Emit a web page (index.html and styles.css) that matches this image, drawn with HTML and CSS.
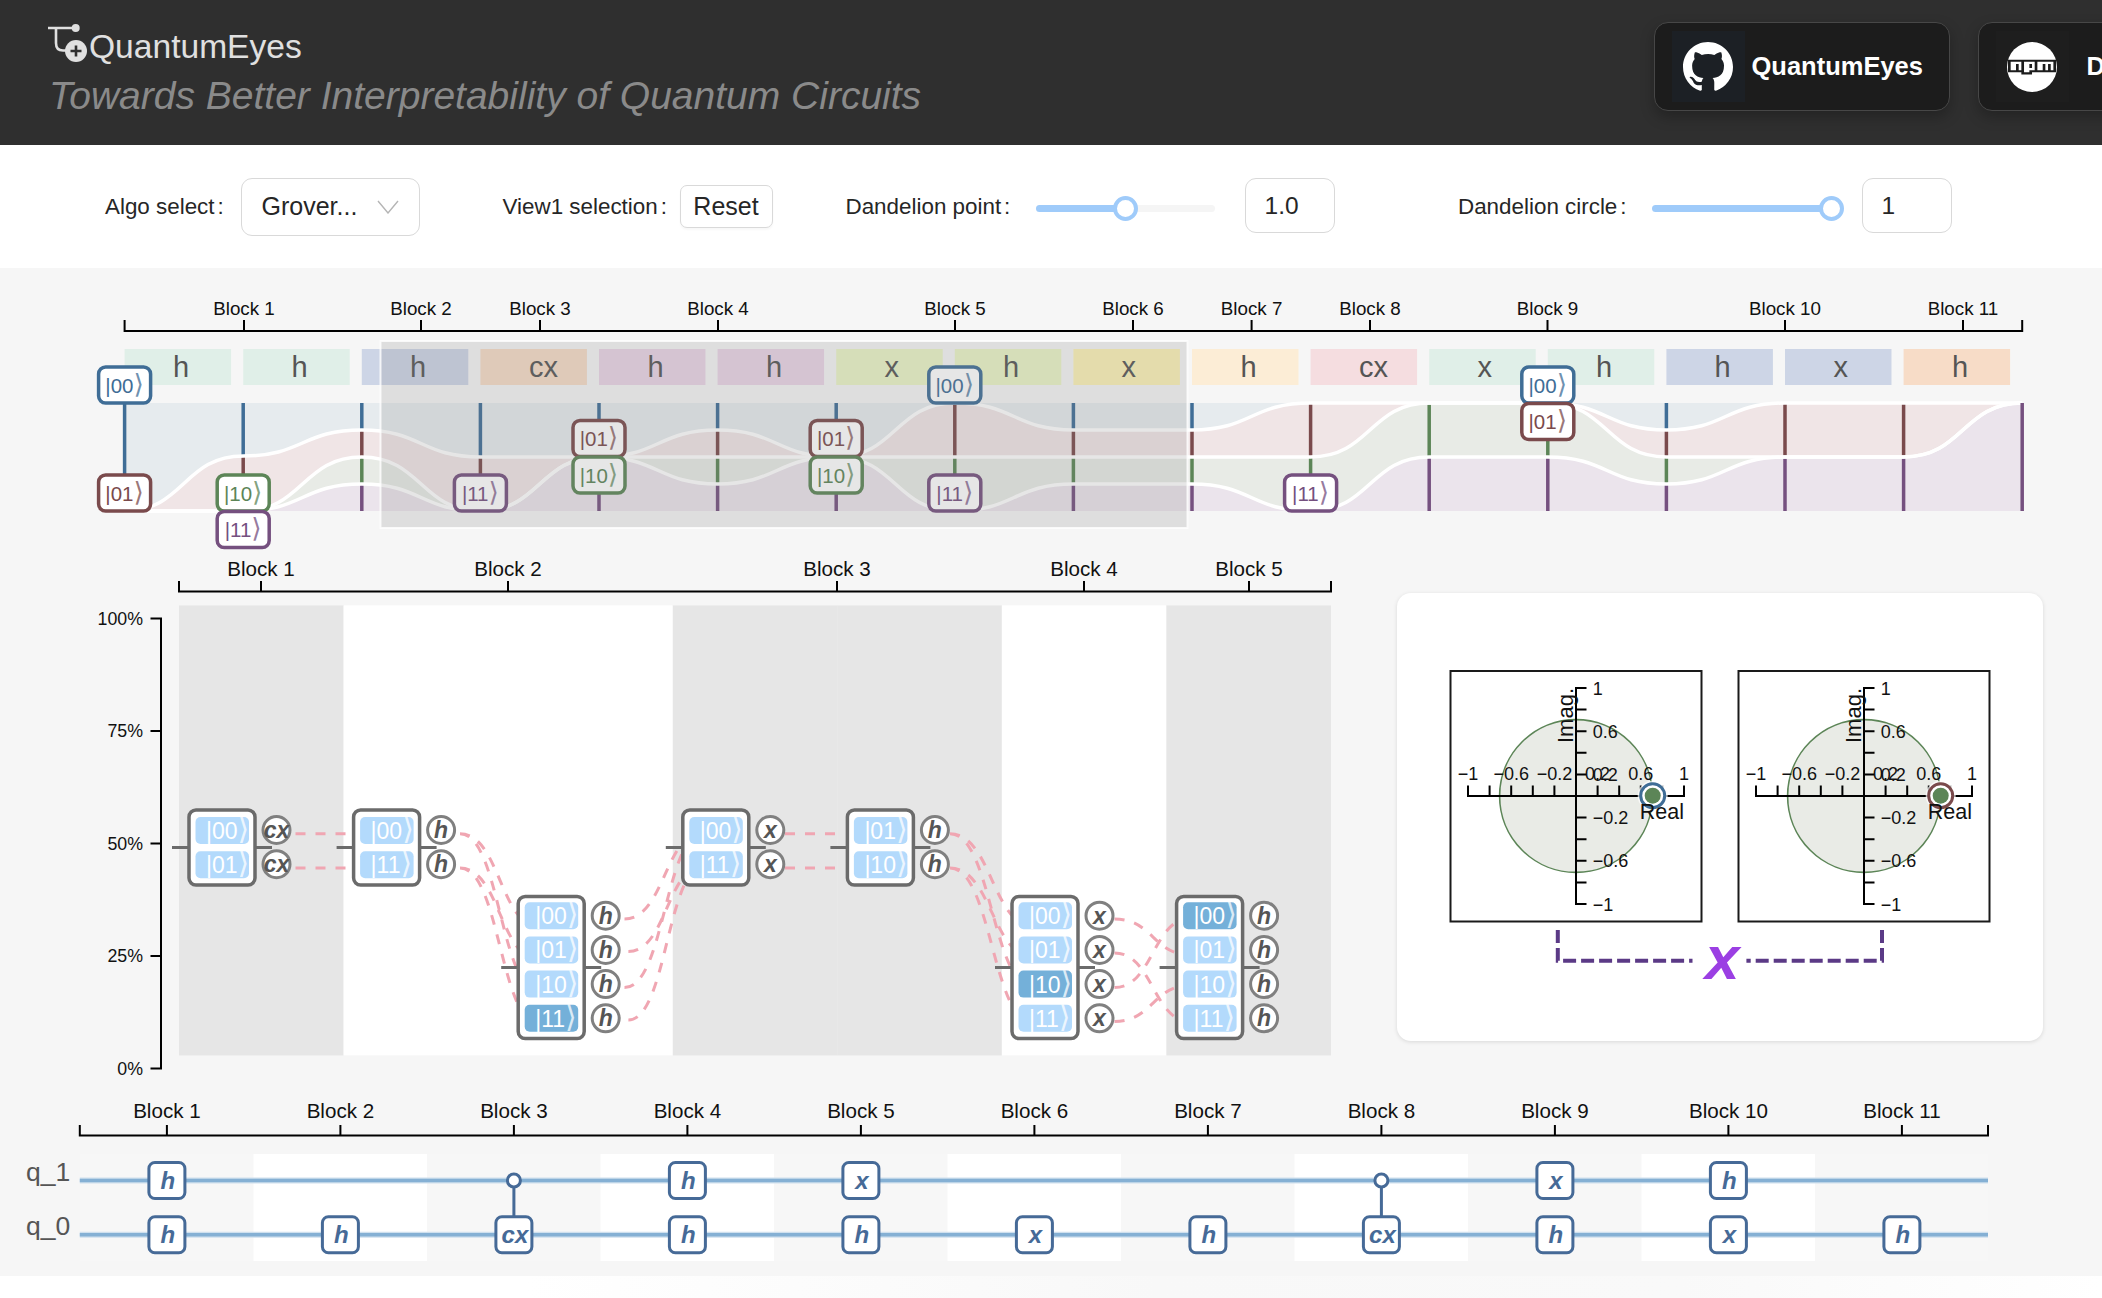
FILE: index.html
```html
<!DOCTYPE html>
<html lang="en">
<head>
<meta charset="utf-8">
<title>QuantumEyes</title>
<link rel="stylesheet" href="styles.css">
</head>
<body>
<header class="header">
  <div class="title-block">
    <h1 class="brand">
      <svg class="logo" viewBox="48 24 40 40" width="40" height="40">
        <path class="logo-line" d="M48 29H75M56 29V44Q56 51.500 63 51.500H68"/>
        <circle class="logo-dot" cx="75.700" cy="29" r="4"/>
        <circle class="logo-dot" cx="76" cy="52" r="11"/>
        <path class="logo-plus" d="M70.500 52H81.500M76 46.500V57.500"/>
      </svg>
      <span>QuantumEyes</span>
    </h1>
    <p class="subtitle">Towards Better Interpretability of Quantum Circuits</p>
  </div>
  <div class="links">
    <a class="link link-gh">
      <span class="link-icon">
        <svg viewBox="0 0 16 16" width="50" height="50"><path class="mark" d="M8 0C3.580 0 0 3.580 0 8c0 3.540 2.290 6.530 5.470 7.590.4.070.55-.17.55-.38 0-.19-.01-.82-.01-1.490-2.010.37-2.530-.49-2.690-.94-.09-.23-.48-.94-.82-1.130-.28-.15-.68-.52-.01-.53.63-.01 1.080.58 1.230.82.72 1.210 1.870.87 2.330.66.07-.52.28-.87.51-1.070-1.780-.2-3.640-.89-3.640-3.950 0-.87.31-1.590.82-2.150-.08-.2-.36-1.020.08-2.120 0 0 .67-.21 2.200.82.64-.18 1.320-.27 2-.27s1.360.09 2 .27c1.530-1.040 2.200-.82 2.200-.82.44 1.100.16 1.920.08 2.120.51.56.82 1.270.82 2.150 0 3.070-1.870 3.750-3.650 3.950.29.25.54.73.54 1.480 0 1.070-.01 1.930-.01 2.200 0 .21.15.46.55.38A8.013 8.013 0 0016 8c0-4.420-3.580-8-8-8z"/></svg>
      </span>
      <span class="link-text">QuantumEyes</span>
    </a>
    <a class="link link-npm">
      <span class="link-icon">
        <svg viewBox="0 0 50 50" width="50" height="50">
          <circle class="mark" cx="25" cy="25" r="25"/>
          <path class="npm" transform="translate(1 17.700) scale(2.670 2.100)" d="M0 0h18v6H9v1H5V6H0V0zM1 5h2V2h1v3h1V1H1V5zM6 1v5h2V5h2V1H6zM8 2h1v2H8V2zM11 1v4h2V2h1v3h1V2h1v3h1V1H11z"/>
        </svg>
      </span>
      <span class="link-text">Download</span>
    </a>
  </div>
</header>

<section class="controls">
  <label class="lbl lbl-algo">Algo select<span class="colon">:</span></label>
  <div class="select">
    <span>Grover...</span>
    <svg class="chev" viewBox="0 0 22 14" width="22" height="14"><path d="M1 1L11 13L21 1"/></svg>
  </div>
  <label class="lbl lbl-view">View1 selection<span class="colon">:</span></label>
  <button class="btn">Reset</button>
  <label class="lbl lbl-point">Dandelion point<span class="colon">:</span></label>
  <div class="slider slider-point">
    <div class="track"><div class="fill fill-half"></div></div>
    <div class="thumb thumb-half"></div>
  </div>
  <div class="num">1.0</div>
  <label class="lbl lbl-circle">Dandelion circle<span class="colon">:</span></label>
  <div class="slider slider-circle">
    <div class="track"><div class="fill fill-full"></div></div>
    <div class="thumb thumb-full"></div>
  </div>
  <div class="num">1</div>
</section>

<main class="main">
  <svg class="view view-top" viewBox="0 268 2102 282" width="2102" height="282">
    <path class="axis" d="M124.600 320V331H2022.200V320M244 320V331M421 320V331M540 320V331M718 320V331M955 320V331M1133 320V331M1251.600 320V331M1370 320V331M1547.500 320V331M1785 320V331M1963 320V331"/>
    <text class="blk" x="244" y="315">Block 1</text>
    <text class="blk" x="421" y="315">Block 2</text>
    <text class="blk" x="540" y="315">Block 3</text>
    <text class="blk" x="718" y="315">Block 4</text>
    <text class="blk" x="955" y="315">Block 5</text>
    <text class="blk" x="1133" y="315">Block 6</text>
    <text class="blk" x="1251.600" y="315">Block 7</text>
    <text class="blk" x="1370" y="315">Block 8</text>
    <text class="blk" x="1547.500" y="315">Block 9</text>
    <text class="blk" x="1785" y="315">Block 10</text>
    <text class="blk" x="1963" y="315">Block 11</text>

    <rect class="g-mint" x="124.600" y="349" width="106.500" height="36"/><text class="gname" x="173" y="377">h</text>
    <rect class="g-mint" x="243.200" y="349" width="106.500" height="36"/><text class="gname" x="291.500" y="377">h</text>
    <rect class="g-blue" x="361.800" y="349" width="106.500" height="36"/><text class="gname" x="410" y="377">h</text>
    <rect class="g-peach" x="480.400" y="349" width="106.500" height="36"/><text class="gname" x="529" y="377">cx</text>
    <rect class="g-mauve" x="599" y="349" width="106.500" height="36"/><text class="gname" x="647.500" y="377">h</text>
    <rect class="g-mauve" x="717.600" y="349" width="106.500" height="36"/><text class="gname" x="766" y="377">h</text>
    <rect class="g-lime" x="836.200" y="349" width="106.500" height="36"/><text class="gname" x="884.500" y="377">x</text>
    <rect class="g-lime" x="954.800" y="349" width="106.500" height="36"/><text class="gname" x="1003" y="377">h</text>
    <rect class="g-yellow" x="1073.400" y="349" width="106.500" height="36"/><text class="gname" x="1121.500" y="377">x</text>
    <rect class="g-cream" x="1192" y="349" width="106.500" height="36"/><text class="gname" x="1240.500" y="377">h</text>
    <rect class="g-rose" x="1310.600" y="349" width="106.500" height="36"/><text class="gname" x="1359" y="377">cx</text>
    <rect class="g-mint" x="1429.200" y="349" width="106.500" height="36"/><text class="gname" x="1477.500" y="377">x</text>
    <rect class="g-mint" x="1547.800" y="349" width="106.500" height="36"/><text class="gname" x="1596" y="377">h</text>
    <rect class="g-blue" x="1666.400" y="349" width="106.500" height="36"/><text class="gname" x="1714.500" y="377">h</text>
    <rect class="g-blue" x="1785" y="349" width="106.500" height="36"/><text class="gname" x="1833.500" y="377">x</text>
    <rect class="g-peach" x="1903.600" y="349" width="106.500" height="36"/><text class="gname" x="1952" y="377">h</text>

    <rect class="band-blue" x="124.600" y="403" width="1897.600" height="108"/>
    <path class="band-red" d="M124.600 511c59.300 0 59.300 -55 118.600 -55c59.300 0 59.300 -26 118.600 -26c59.300 0 59.300 27 118.600 27c59.300 0 59.300 0 118.600 0c59.300 0 59.300 -27 118.600 -27c59.300 0 59.300 27 118.600 27c59.300 0 59.300 -54 118.600 -54c59.300 0 59.300 27 118.600 27c59.300 0 59.300 0 118.600 0c59.300 0 59.300 -27 118.600 -27c59.300 0 59.300 0 118.600 0c59.300 0 59.300 0 118.600 0c59.300 0 59.300 27 118.600 27c59.300 0 59.300 -27 118.600 -27c59.300 0 59.300 0 118.600 0c59.300 0 59.300 0 118.600 0V511H124.600"/>
    <path class="band-green" d="M124.600 511c59.300 0 59.300 0 118.600 0c59.300 0 59.300 -54 118.600 -54c59.300 0 59.300 54 118.600 54c59.300 0 59.300 -54 118.600 -54c59.300 0 59.300 0 118.600 0c59.300 0 59.300 0 118.600 0c59.300 0 59.300 0 118.600 0c59.300 0 59.300 0 118.600 0c59.300 0 59.300 0 118.600 0c59.300 0 59.300 0 118.600 0c59.300 0 59.300 -54 118.600 -54c59.300 0 59.300 0 118.600 0c59.300 0 59.300 54 118.600 54c59.300 0 59.300 0 118.600 0c59.300 0 59.300 0 118.600 0c59.300 0 59.300 -54 118.600 -54V511H124.600"/>
    <path class="band-purple" d="M124.600 511c59.300 0 59.300 0 118.600 0c59.300 0 59.300 -27 118.600 -27c59.300 0 59.300 27 118.600 27c59.300 0 59.300 -54 118.600 -54c59.300 0 59.300 27 118.600 27c59.300 0 59.300 -27 118.600 -27c59.300 0 59.300 54 118.600 54c59.300 0 59.300 -27 118.600 -27c59.300 0 59.300 0 118.600 0c59.300 0 59.300 27 118.600 27c59.300 0 59.300 -54 118.600 -54c59.300 0 59.300 0 118.600 0c59.300 0 59.300 27 118.600 27c59.300 0 59.300 -27 118.600 -27c59.300 0 59.300 0 118.600 0c59.300 0 59.300 -54 118.600 -54V511H124.600"/>
    <path class="v v-blue" d="M124.600 403V511M243.200 403V456M361.800 403V430M480.400 403V457M599 403V457M717.600 403V430M836.200 403V457M1073.400 403V430M1192 403V430M1666.400 403V430"/>
    <path class="v v-red" d="M243.200 456V511M361.800 430V457M480.400 457V511M717.600 430V457M954.800 403V457M1073.400 430V457M1192 430V457M1310.600 403V457M1666.400 430V457M1785 403V457M1903.600 403V457"/>
    <path class="v v-green" d="M361.800 457V484M717.600 457V484M954.800 457V511M1073.400 457V484M1192 457V484M1310.600 457V511M1429.200 403V457M1547.800 403V457M1666.400 457V484"/>
    <path class="v v-purple" d="M361.800 484V511M599 457V511M717.600 484V511M836.200 457V511M1073.400 484V511M1192 484V511M1429.200 457V511M1547.800 457V511M1666.400 484V511M1785 457V511M1903.600 457V511"/>
    <path class="curve" d="M124.600 511c59.300 0 59.300 -55 118.600 -55c59.300 0 59.300 -26 118.600 -26c59.300 0 59.300 27 118.600 27c59.300 0 59.300 0 118.600 0c59.300 0 59.300 -27 118.600 -27c59.300 0 59.300 27 118.600 27c59.300 0 59.300 -54 118.600 -54c59.300 0 59.300 27 118.600 27c59.300 0 59.300 0 118.600 0c59.300 0 59.300 -27 118.600 -27c59.300 0 59.300 0 118.600 0c59.300 0 59.300 0 118.600 0c59.300 0 59.300 27 118.600 27c59.300 0 59.300 -27 118.600 -27c59.300 0 59.300 0 118.600 0c59.300 0 59.300 0 118.600 0"/>
    <path class="curve" d="M124.600 511c59.300 0 59.300 0 118.600 0c59.300 0 59.300 -54 118.600 -54c59.300 0 59.300 54 118.600 54c59.300 0 59.300 -54 118.600 -54c59.300 0 59.300 0 118.600 0c59.300 0 59.300 0 118.600 0c59.300 0 59.300 0 118.600 0c59.300 0 59.300 0 118.600 0c59.300 0 59.300 0 118.600 0c59.300 0 59.300 0 118.600 0c59.300 0 59.300 -54 118.600 -54c59.300 0 59.300 0 118.600 0c59.300 0 59.300 54 118.600 54c59.300 0 59.300 0 118.600 0c59.300 0 59.300 0 118.600 0c59.300 0 59.300 -54 118.600 -54"/>
    <path class="curve" d="M124.600 511c59.300 0 59.300 0 118.600 0c59.300 0 59.300 -27 118.600 -27c59.300 0 59.300 27 118.600 27c59.300 0 59.300 -54 118.600 -54c59.300 0 59.300 27 118.600 27c59.300 0 59.300 -27 118.600 -27c59.300 0 59.300 54 118.600 54c59.300 0 59.300 -27 118.600 -27c59.300 0 59.300 0 118.600 0c59.300 0 59.300 27 118.600 27c59.300 0 59.300 -54 118.600 -54c59.300 0 59.300 0 118.600 0c59.300 0 59.300 27 118.600 27c59.300 0 59.300 -27 118.600 -27c59.300 0 59.300 0 118.600 0c59.300 0 59.300 -54 118.600 -54"/>
    <path class="v v-purple" d="M2022.200 403V511"/>

    <g class="ket k-blue" transform="translate(124.600 385)"><rect x="-26" y="-18" width="52" height="36" rx="7"/><text y="7.500">|00<tspan class="ang">⟩</tspan></text></g>
    <g class="ket k-red" transform="translate(124.600 493)"><rect x="-26" y="-18" width="52" height="36" rx="7"/><text y="7.500">|01<tspan class="ang">⟩</tspan></text></g>
    <g class="ket k-green" transform="translate(243.200 493)"><rect x="-26" y="-18" width="52" height="36" rx="7"/><text y="7.500">|10<tspan class="ang">⟩</tspan></text></g>
    <g class="ket k-purple" transform="translate(243.200 529.500)"><rect x="-26" y="-18" width="52" height="36" rx="7"/><text y="7.500">|11<tspan class="ang">⟩</tspan></text></g>
    <g class="ket k-purple" transform="translate(480.400 493)"><rect x="-26" y="-18" width="52" height="36" rx="7"/><text y="7.500">|11<tspan class="ang">⟩</tspan></text></g>
    <g class="ket k-red" transform="translate(599 438.500)"><rect x="-26" y="-18" width="52" height="36" rx="7"/><text y="7.500">|01<tspan class="ang">⟩</tspan></text></g>
    <g class="ket k-green" transform="translate(599 475)"><rect x="-26" y="-18" width="52" height="36" rx="7"/><text y="7.500">|10<tspan class="ang">⟩</tspan></text></g>
    <g class="ket k-red" transform="translate(836.200 438.500)"><rect x="-26" y="-18" width="52" height="36" rx="7"/><text y="7.500">|01<tspan class="ang">⟩</tspan></text></g>
    <g class="ket k-green" transform="translate(836.200 475)"><rect x="-26" y="-18" width="52" height="36" rx="7"/><text y="7.500">|10<tspan class="ang">⟩</tspan></text></g>
    <g class="ket k-blue" transform="translate(954.800 385)"><rect x="-26" y="-18" width="52" height="36" rx="7"/><text y="7.500">|00<tspan class="ang">⟩</tspan></text></g>
    <g class="ket k-purple" transform="translate(954.800 493)"><rect x="-26" y="-18" width="52" height="36" rx="7"/><text y="7.500">|11<tspan class="ang">⟩</tspan></text></g>
    <g class="ket k-purple" transform="translate(1310.600 493)"><rect x="-26" y="-18" width="52" height="36" rx="7"/><text y="7.500">|11<tspan class="ang">⟩</tspan></text></g>
    <g class="ket k-blue" transform="translate(1547.800 385)"><rect x="-26" y="-18" width="52" height="36" rx="7"/><text y="7.500">|00<tspan class="ang">⟩</tspan></text></g>
    <g class="ket k-red" transform="translate(1547.800 421.500)"><rect x="-26" y="-18" width="52" height="36" rx="7"/><text y="7.500">|01<tspan class="ang">⟩</tspan></text></g>

    <rect class="brush" x="380.500" y="341" width="807" height="187"/>
  </svg>

  <div class="middle">
    <svg class="view view-mid" viewBox="0 550 1397 530" width="1397" height="530">
      <defs>
        <g id="frame2">
          <path class="stub" d="M-17 847.500H0M66 847.500H83"/>
          <rect class="frame" x="0" y="810" width="66" height="75" rx="7"/>
          <circle class="op" cx="87.500" cy="830" r="13.500"/>
          <circle class="op" cx="87.500" cy="864.200" r="13.500"/>
        </g>
        <g id="frame4">
          <path class="stub" d="M-17 967.500H0M66 967.500H83"/>
          <rect class="frame" x="0" y="896.500" width="66" height="142" rx="7"/>
          <circle class="op" cx="87.500" cy="915.700" r="13.500"/>
          <circle class="op" cx="87.500" cy="949.900" r="13.500"/>
          <circle class="op" cx="87.500" cy="984.100" r="13.500"/>
          <circle class="op" cx="87.500" cy="1018.300" r="13.500"/>
        </g>
      </defs>
      <path class="axis" d="M179 581V591.500H1331V581M261 581V591.500M508 581V591.500M837 581V591.500M1084 581V591.500M1249 581V591.500"/>
      <text class="blk blk-lg" x="261" y="576">Block 1</text>
      <text class="blk blk-lg" x="508" y="576">Block 2</text>
      <text class="blk blk-lg" x="837" y="576">Block 3</text>
      <text class="blk blk-lg" x="1084" y="576">Block 4</text>
      <text class="blk blk-lg" x="1249" y="576">Block 5</text>

      <rect class="col-gray" x="179" y="605.400" width="164.600" height="450"/>
      <rect class="col-white" x="343.600" y="605.400" width="329.200" height="450"/>
      <rect class="col-gray" x="672.800" y="605.400" width="164.600" height="450"/>
      <rect class="col-gray" x="837.300" y="605.400" width="164.600" height="450"/>
      <rect class="col-white" x="1001.800" y="605.400" width="164.600" height="450"/>
      <rect class="col-gray" x="1166.400" y="605.400" width="164.600" height="450"/>

      <path class="axis" d="M150.500 618.500H161V1068.500H150.500M150.500 731H161M150.500 843.500H161M150.500 956H161"/>
      <text class="pct" x="143" y="624.500">100%</text>
      <text class="pct" x="143" y="737">75%</text>
      <text class="pct" x="143" y="849.500">50%</text>
      <text class="pct" x="143" y="962">25%</text>
      <text class="pct" x="143" y="1074.500">0%</text>

      <path class="dash" d="M295.500 833.700H349M295.500 868H349"/>
      <path class="dash" d="M460 833.700C500 833.700 500 927 540 927M460 833.700C500 833.700 500 992 540 992M460 868C500 868 500 960 540 960M460 868C500 868 500 1025 540 1025"/>
      <path class="dash" d="M624.500 919C665 919 665 830 705.800 830M628.400 951.500C667 951.500 667 864 705.800 864M624.500 987.600C665 987.600 665 830 705.800 830M628.400 1020C667 1020 667 864 705.800 864"/>
      <path class="dash" d="M785 833.700H845M785 868H845"/>
      <path class="dash" d="M950 833.700C992 833.700 992 927 1035 927M950 833.700C992 833.700 992 989 1035 989M950 868C992 868 992 958 1035 958M950 868C992 868 992 1025 1035 1025"/>
      <path class="dash" d="M1114.500 919C1153 919 1153 955 1191 955M1114.500 953C1153 953 1153 1022 1191 1022M1114.500 987.600C1153 987.600 1153 918 1191 918M1114.500 1021.400C1153 1021.400 1153 985 1191 985"/>

      <g transform="translate(189 0)">
        <use href="#frame2"/>
        <rect class="cell" x="6.500" y="817" width="53.500" height="27" rx="5"/><text class="cell-t" x="17" y="839">|00<tspan class="ang">⟩</tspan></text>
        <rect class="cell" x="6.500" y="851.200" width="53.500" height="27" rx="5"/><text class="cell-t" x="17" y="873.200">|01<tspan class="ang">⟩</tspan></text>
        <text class="op-t" x="87.500" y="838">cx</text><text class="op-t" x="87.500" y="872.200">cx</text>
      </g>
      <g transform="translate(353.600 0)">
        <use href="#frame2"/>
        <rect class="cell" x="6.500" y="817" width="53.500" height="27" rx="5"/><text class="cell-t" x="17" y="839">|00<tspan class="ang">⟩</tspan></text>
        <rect class="cell" x="6.500" y="851.200" width="53.500" height="27" rx="5"/><text class="cell-t" x="17" y="873.200">|11<tspan class="ang">⟩</tspan></text>
        <text class="op-t" x="87.500" y="838">h</text><text class="op-t" x="87.500" y="872.200">h</text>
      </g>
      <g transform="translate(518.200 0)">
        <use href="#frame4"/>
        <rect class="cell" x="6.500" y="902.200" width="53.500" height="27" rx="5"/><text class="cell-t" x="17" y="924.200">|00<tspan class="ang">⟩</tspan></text>
        <rect class="cell" x="6.500" y="936.400" width="53.500" height="27" rx="5"/><text class="cell-t" x="17" y="958.400">|01<tspan class="ang">⟩</tspan></text>
        <rect class="cell" x="6.500" y="970.600" width="53.500" height="27" rx="5"/><text class="cell-t" x="17" y="992.600">|10<tspan class="ang">⟩</tspan></text>
        <rect class="cell cell-on" x="6.500" y="1004.800" width="53.500" height="27" rx="5"/><text class="cell-t" x="17" y="1026.800">|11<tspan class="ang">⟩</tspan></text>
        <text class="op-t" x="87.500" y="923.700">h</text><text class="op-t" x="87.500" y="957.900">h</text><text class="op-t" x="87.500" y="992.100">h</text><text class="op-t" x="87.500" y="1026.300">h</text>
      </g>
      <g transform="translate(682.800 0)">
        <use href="#frame2"/>
        <rect class="cell" x="6.500" y="817" width="53.500" height="27" rx="5"/><text class="cell-t" x="17" y="839">|00<tspan class="ang">⟩</tspan></text>
        <rect class="cell" x="6.500" y="851.200" width="53.500" height="27" rx="5"/><text class="cell-t" x="17" y="873.200">|11<tspan class="ang">⟩</tspan></text>
        <text class="op-t" x="87.500" y="838">x</text><text class="op-t" x="87.500" y="872.200">x</text>
      </g>
      <g transform="translate(847.400 0)">
        <use href="#frame2"/>
        <rect class="cell" x="6.500" y="817" width="53.500" height="27" rx="5"/><text class="cell-t" x="17" y="839">|01<tspan class="ang">⟩</tspan></text>
        <rect class="cell" x="6.500" y="851.200" width="53.500" height="27" rx="5"/><text class="cell-t" x="17" y="873.200">|10<tspan class="ang">⟩</tspan></text>
        <text class="op-t" x="87.500" y="838">h</text><text class="op-t" x="87.500" y="872.200">h</text>
      </g>
      <g transform="translate(1012 0)">
        <use href="#frame4"/>
        <rect class="cell" x="6.500" y="902.200" width="53.500" height="27" rx="5"/><text class="cell-t" x="17" y="924.200">|00<tspan class="ang">⟩</tspan></text>
        <rect class="cell" x="6.500" y="936.400" width="53.500" height="27" rx="5"/><text class="cell-t" x="17" y="958.400">|01<tspan class="ang">⟩</tspan></text>
        <rect class="cell cell-on" x="6.500" y="970.600" width="53.500" height="27" rx="5"/><text class="cell-t" x="17" y="992.600">|10<tspan class="ang">⟩</tspan></text>
        <rect class="cell" x="6.500" y="1004.800" width="53.500" height="27" rx="5"/><text class="cell-t" x="17" y="1026.800">|11<tspan class="ang">⟩</tspan></text>
        <text class="op-t" x="87.500" y="923.700">x</text><text class="op-t" x="87.500" y="957.900">x</text><text class="op-t" x="87.500" y="992.100">x</text><text class="op-t" x="87.500" y="1026.300">x</text>
      </g>
      <g transform="translate(1176.600 0)">
        <use href="#frame4"/>
        <rect class="cell cell-on" x="6.500" y="902.200" width="53.500" height="27" rx="5"/><text class="cell-t" x="17" y="924.200">|00<tspan class="ang">⟩</tspan></text>
        <rect class="cell" x="6.500" y="936.400" width="53.500" height="27" rx="5"/><text class="cell-t" x="17" y="958.400">|01<tspan class="ang">⟩</tspan></text>
        <rect class="cell" x="6.500" y="970.600" width="53.500" height="27" rx="5"/><text class="cell-t" x="17" y="992.600">|10<tspan class="ang">⟩</tspan></text>
        <rect class="cell" x="6.500" y="1004.800" width="53.500" height="27" rx="5"/><text class="cell-t" x="17" y="1026.800">|11<tspan class="ang">⟩</tspan></text>
        <text class="op-t" x="87.500" y="923.700">h</text><text class="op-t" x="87.500" y="957.900">h</text><text class="op-t" x="87.500" y="992.100">h</text><text class="op-t" x="87.500" y="1026.300">h</text>
      </g>
    </svg>

    <div class="card">
      <svg viewBox="1397 593 646 448" width="646" height="448">
        <rect class="box" x="1450.500" y="671" width="251" height="250.500"/>
        <circle class="unit" cx="1576" cy="796" r="76.400"/>
        <path class="axis" d="M1468 785.500V796H1684V785.500M1489.600 785.500V796M1511.200 785.500V796M1532.800 785.500V796M1554.400 785.500V796M1597.600 785.500V796M1619.200 785.500V796M1640.800 785.500V796M1662.400 785.500V796"/>
        <path class="axis" d="M1586.500 688H1576V904H1586.500M1576 709.600H1586.500M1576 731.200H1586.500M1576 752.800H1586.500M1576 774.400H1586.500M1576 817.600H1586.500M1576 839.200H1586.500M1576 860.800H1586.500M1576 882.400H1586.500"/>
        <text class="xt" x="1468" y="780">−1</text><text class="xt" x="1511.200" y="780">−0.6</text><text class="xt" x="1554.400" y="780">−0.2</text><text class="xt" x="1597.600" y="780">0.2</text><text class="xt" x="1640.800" y="780">0.6</text><text class="xt" x="1684" y="780">1</text>
        <text class="yt" x="1592.700" y="694.500">1</text><text class="yt" x="1592.700" y="737.700">0.6</text><text class="yt" x="1592.700" y="780.900">0.2</text><text class="yt" x="1592.700" y="824">−0.2</text><text class="yt" x="1592.700" y="867.300">−0.6</text><text class="yt" x="1592.700" y="910.500">−1</text>
        <circle class="halo" cx="1652.700" cy="795.700" r="15"/>
        <circle class="ring r-blue" cx="1652.700" cy="795.700" r="12"/>
        <circle class="dot" cx="1652.700" cy="795.700" r="8"/>
        <text class="ax-real" x="1684" y="818.500">Real</text>
        <text class="ax-imag" transform="translate(1573 688) rotate(-90)">Imag.</text>

        <rect class="box" x="1738.500" y="671" width="251" height="250.500"/>
        <circle class="unit" cx="1864" cy="796" r="76.400"/>
        <path class="axis" d="M1756 785.500V796H1972V785.500M1777.600 785.500V796M1799.200 785.500V796M1820.800 785.500V796M1842.400 785.500V796M1885.600 785.500V796M1907.200 785.500V796M1928.800 785.500V796M1950.400 785.500V796"/>
        <path class="axis" d="M1874.500 688H1864V904H1874.500M1864 709.600H1874.500M1864 731.200H1874.500M1864 752.800H1874.500M1864 774.400H1874.500M1864 817.600H1874.500M1864 839.200H1874.500M1864 860.800H1874.500M1864 882.400H1874.500"/>
        <text class="xt" x="1756" y="780">−1</text><text class="xt" x="1799.200" y="780">−0.6</text><text class="xt" x="1842.400" y="780">−0.2</text><text class="xt" x="1885.600" y="780">0.2</text><text class="xt" x="1928.800" y="780">0.6</text><text class="xt" x="1972" y="780">1</text>
        <text class="yt" x="1880.700" y="694.500">1</text><text class="yt" x="1880.700" y="737.700">0.6</text><text class="yt" x="1880.700" y="780.900">0.2</text><text class="yt" x="1880.700" y="824">−0.2</text><text class="yt" x="1880.700" y="867.300">−0.6</text><text class="yt" x="1880.700" y="910.500">−1</text>
        <circle class="halo" cx="1940.700" cy="795.700" r="15"/>
        <circle class="ring r-red" cx="1940.700" cy="795.700" r="12"/>
        <circle class="dot" cx="1940.700" cy="795.700" r="8"/>
        <text class="ax-real" x="1972" y="818.500">Real</text>
        <text class="ax-imag" transform="translate(1861 688) rotate(-90)">Imag.</text>

        <path class="bracket" d="M1557.800 930V960.700H1692.500M1882 930V960.700H1746.400"/>
        <text class="gate-x" x="1705" y="979">x</text>
      </svg>
    </div>
  </div>

  <svg class="view view-bottom" viewBox="0 1080 2102 196" width="2102" height="196">
    <path class="axis" d="M79.800 1125V1135.500H1988V1125M166.900 1125V1135.500M340.400 1125V1135.500M513.900 1125V1135.500M687.400 1125V1135.500M860.900 1125V1135.500M1034.400 1125V1135.500M1207.900 1125V1135.500M1381.400 1125V1135.500M1554.900 1125V1135.500M1728.400 1125V1135.500M1901.900 1125V1135.500"/>
    <text class="blk blk-lg" x="166.900" y="1118">Block 1</text>
    <text class="blk blk-lg" x="340.400" y="1118">Block 2</text>
    <text class="blk blk-lg" x="513.900" y="1118">Block 3</text>
    <text class="blk blk-lg" x="687.400" y="1118">Block 4</text>
    <text class="blk blk-lg" x="860.900" y="1118">Block 5</text>
    <text class="blk blk-lg" x="1034.400" y="1118">Block 6</text>
    <text class="blk blk-lg" x="1207.900" y="1118">Block 7</text>
    <text class="blk blk-lg" x="1381.400" y="1118">Block 8</text>
    <text class="blk blk-lg" x="1554.900" y="1118">Block 9</text>
    <text class="blk blk-lg" x="1728.400" y="1118">Block 10</text>
    <text class="blk blk-lg" x="1901.900" y="1118">Block 11</text>

    <rect class="q-odd" x="80" y="1154" width="173.500" height="107"/>
    <rect class="q-even" x="253.500" y="1154" width="173.500" height="107"/>
    <rect class="q-odd" x="427" y="1154" width="173.500" height="107"/>
    <rect class="q-even" x="600.500" y="1154" width="173.500" height="107"/>
    <rect class="q-odd" x="774" y="1154" width="173.500" height="107"/>
    <rect class="q-even" x="947.500" y="1154" width="173.500" height="107"/>
    <rect class="q-odd" x="1121" y="1154" width="173.500" height="107"/>
    <rect class="q-even" x="1294.500" y="1154" width="173.500" height="107"/>
    <rect class="q-odd" x="1468" y="1154" width="173.500" height="107"/>
    <rect class="q-even" x="1641.500" y="1154" width="173.500" height="107"/>
    <rect class="q-odd" x="1815" y="1154" width="173" height="107"/>

    <text class="qname" x="26" y="1181">q_1</text>
    <text class="qname" x="26" y="1235">q_0</text>

    <path class="wire-halo" d="M79.800 1180.500H1988M79.800 1234.700H1988"/>
    <path class="wire" d="M79.800 1180.500H1988M79.800 1234.700H1988"/>
    <path class="ctrl-line" d="M513.900 1187V1216M1381.400 1187V1216"/>
    <circle class="ctrl" cx="513.900" cy="1180.500" r="6.500"/>
    <circle class="ctrl" cx="1381.400" cy="1180.500" r="6.500"/>

    <g class="qg" transform="translate(166.900 1180.500)"><rect x="-18" y="-18" width="36" height="36" rx="6"/><text x="1" y="8.500">h</text></g>
    <g class="qg" transform="translate(687.400 1180.500)"><rect x="-18" y="-18" width="36" height="36" rx="6"/><text x="1" y="8.500">h</text></g>
    <g class="qg" transform="translate(860.900 1180.500)"><rect x="-18" y="-18" width="36" height="36" rx="6"/><text x="1" y="8.500">x</text></g>
    <g class="qg" transform="translate(1554.900 1180.500)"><rect x="-18" y="-18" width="36" height="36" rx="6"/><text x="1" y="8.500">x</text></g>
    <g class="qg" transform="translate(1728.400 1180.500)"><rect x="-18" y="-18" width="36" height="36" rx="6"/><text x="1" y="8.500">h</text></g>

    <g class="qg" transform="translate(166.900 1234.700)"><rect x="-18" y="-18" width="36" height="36" rx="6"/><text x="1" y="8.500">h</text></g>
    <g class="qg" transform="translate(340.400 1234.700)"><rect x="-18" y="-18" width="36" height="36" rx="6"/><text x="1" y="8.500">h</text></g>
    <g class="qg" transform="translate(513.900 1234.700)"><rect x="-18" y="-18" width="36" height="36" rx="6"/><text x="1" y="8">cx</text></g>
    <g class="qg" transform="translate(687.400 1234.700)"><rect x="-18" y="-18" width="36" height="36" rx="6"/><text x="1" y="8.500">h</text></g>
    <g class="qg" transform="translate(860.900 1234.700)"><rect x="-18" y="-18" width="36" height="36" rx="6"/><text x="1" y="8.500">h</text></g>
    <g class="qg" transform="translate(1034.400 1234.700)"><rect x="-18" y="-18" width="36" height="36" rx="6"/><text x="1" y="8.500">x</text></g>
    <g class="qg" transform="translate(1207.900 1234.700)"><rect x="-18" y="-18" width="36" height="36" rx="6"/><text x="1" y="8.500">h</text></g>
    <g class="qg" transform="translate(1381.400 1234.700)"><rect x="-18" y="-18" width="36" height="36" rx="6"/><text x="1" y="8">cx</text></g>
    <g class="qg" transform="translate(1554.900 1234.700)"><rect x="-18" y="-18" width="36" height="36" rx="6"/><text x="1" y="8.500">h</text></g>
    <g class="qg" transform="translate(1728.400 1234.700)"><rect x="-18" y="-18" width="36" height="36" rx="6"/><text x="1" y="8.500">x</text></g>
    <g class="qg" transform="translate(1901.900 1234.700)"><rect x="-18" y="-18" width="36" height="36" rx="6"/><text x="1" y="8.500">h</text></g>
  </svg>
</main>
<div class="foot"></div>
</body>
</html>
```
FILE: styles.css
```css
* { box-sizing: border-box; }
html, body { margin: 0; padding: 0; }
body {
  width: 2102px;
  height: 1298px;
  overflow: hidden;
  background: #fff;
  font-family: "Liberation Sans", "DejaVu Sans", sans-serif;
  color: #262626;
}

/* header */
.header {
  display: flex;
  height: 145px;
  background: #2f2f2f;
  overflow: hidden;
  padding-left: 48px;
}
.title-block { flex: 0 0 1605.5px; padding-top: 26px; }
.brand {
  display: flex;
  align-items: center;
  height: 42px;
  margin: 0;
  font-size: 33.6px;
  font-weight: 400;
  color: #e0e0e0;
}
.logo { flex: none; margin-right: 1px; margin-top: -8px; }
.logo-line { fill: none; stroke: #e0e0e0; stroke-width: 2.6; }
.logo-dot { fill: #e0e0e0; }
.logo-plus { fill: none; stroke: #2f2f2f; stroke-width: 2.6; }
.subtitle {
  margin: 6px 0 0 1px;
  font-size: 39px;
  line-height: 44px;
  font-style: italic;
  color: #8a8a8a;
  white-space: nowrap;
}
.links { display: flex; gap: 28px; flex: none; padding-top: 22px; }
.link {
  display: flex;
  align-items: center;
  height: 89px;
  background: #1c1c1c;
  border: 1px solid #474747;
  border-radius: 14px;
  box-shadow: 0 6px 14px rgba(0, 0, 0, .25);
  flex: none;
}
.link-gh { width: 296px; padding-left: 17px; }
.link-npm { width: 296px; padding-left: 17px; }
.link-icon {
  display: flex;
  align-items: center;
  justify-content: center;
  width: 73px;
  height: 71px;
  background: #1c2025;
  flex: none;
}
.link-npm .link-icon { background: #1e1e1e; }
.mark { fill: #fff; }
.npm { fill: #1c1c1c; fill-rule: evenodd; }
.link-text { margin-left: 7px; font-size: 25.5px; font-weight: 700; color: #fff; white-space: nowrap; }
.link-npm .link-text { margin-left: 18px; }

/* controls */
.controls {
  display: flex;
  align-items: center;
  height: 123px;
  padding-left: 105px;
  background: #fff;
  font-size: 22.4px;
}
.lbl { white-space: nowrap; flex: none; }
.colon { margin-left: 3px; }
.lbl-algo { width: 135.5px; }
.lbl-view { width: 177px; margin-left: 83px; }
.lbl-point { width: 190px; margin-left: 73px; }
.lbl-circle { width: 193.5px; margin-left: 123.5px; }
.select {
  display: flex;
  align-items: center;
  justify-content: space-between;
  width: 179px;
  height: 58px;
  padding: 0 20px;
  border: 1px solid #d9d9d9;
  border-radius: 11px;
  font-size: 25px;
  flex: none;
}
.chev path { fill: none; stroke: #b5b5b5; stroke-width: 1.4; }
.btn {
  width: 93px;
  height: 43px;
  padding: 0;
  background: #fff;
  border: 1px solid #d9d9d9;
  border-radius: 7px;
  box-shadow: 0 2px 2px rgba(0, 0, 0, .03);
  font: 25px "Liberation Sans", sans-serif;
  color: #262626;
  flex: none;
}
.slider { position: relative; height: 25px; margin-top: 4px; flex: none; }
.slider-point { width: 179px; }
.slider-circle { width: 180px; }
.track { height: 7px; margin-top: 0; position: relative; top: 9px; background: #f5f5f5; border-radius: 4px; overflow: hidden; }
.fill { height: 7px; background: #9fcbfa; }
.fill-half { width: 90px; }
.fill-full { width: 100%; }
.thumb {
  position: absolute;
  top: 0;
  width: 25px;
  height: 25px;
  background: #fff;
  border: 4px solid #9fcbfa;
  border-radius: 50%;
}
.thumb-half { left: 77.5px; }
.thumb-full { right: -12.5px; }
.num {
  width: 90px;
  height: 55px;
  margin-left: 30px;
  margin-bottom: 2px;
  padding-left: 19px;
  line-height: 53px;
  border: 1px solid #d9d9d9;
  border-radius: 11px;
  font-size: 24.5px;
  flex: none;
}

/* main */
.main { height: 1008px; background: #f6f6f6; }
.view { display: block; flex: none; }
.middle { display: flex; height: 530px; }
.card {
  width: 646px;
  height: 448px;
  margin-top: 43px;
  background: #fff;
  border-radius: 14px;
  box-shadow: 0 1px 4px rgba(0, 0, 0, .12);
  flex: none;
}
.card svg { display: block; }
.foot { height: 22px; background: linear-gradient(90deg, #fff 25%, #f8f8f8 55%, #f9f9f9 80%, #fff 100%); }

svg text { font-family: "Liberation Sans", "DejaVu Sans", sans-serif; }
.axis { fill: none; stroke: #000; stroke-width: 2; }
.blk { font-size: 18.8px; text-anchor: middle; fill: #111; }
.blk-lg { font-size: 20.6px; }
.gname { font-size: 29px; fill: #555; }
.g-mint { fill: #e0efe8; }
.g-blue { fill: #cdd5e6; }
.g-peach { fill: #f7dcc7; }
.g-mauve { fill: #ead5e7; }
.g-lime { fill: #ebf5c7; }
.g-yellow { fill: #fdf3b7; }
.g-cream { fill: #fcedd6; }
.g-rose { fill: #f5dde0; }
.band-blue { fill: #e6ebee; }
.band-red { fill: #f0e5e6; }
.band-green { fill: #e8ebe6; }
.band-purple { fill: #ebe4ec; }
.curve { fill: none; stroke: #fff; stroke-width: 3.5; }
.v { fill: none; stroke-width: 3.5; }
.v-blue { stroke: #3f6d96; }
.v-red { stroke: #7a4a4c; }
.v-green { stroke: #5c8557; }
.v-purple { stroke: #75507f; }
.ket rect { fill: #fff; stroke-width: 3.5; }
.ket text { font-size: 20.5px; text-anchor: middle; }
.ang { font-size: 1.3em; fill-opacity: .75; }
.k-blue rect { stroke: #3f6d96; }
.k-blue text { fill: #3f6d96; }
.k-red rect { stroke: #7a4a4c; }
.k-red text { fill: #7a4a4c; }
.k-green rect { stroke: #5c8557; }
.k-green text { fill: #5c8557; }
.k-purple rect { stroke: #75507f; }
.k-purple text { fill: #75507f; }
.brush { fill: rgba(128, 128, 128, .2); stroke: #fff; stroke-width: 2; stroke-opacity: .8; }

.col-gray { fill: #e6e6e6; }
.col-white { fill: #fff; }
.pct { font-size: 17.8px; text-anchor: end; fill: #111; }
.dash { fill: none; stroke: #f0a6b2; stroke-width: 3; stroke-dasharray: 10 10; }
.stub { fill: none; stroke: #6b6b6b; stroke-width: 3; }
.frame { fill: #fff; stroke: #6b6b6b; stroke-width: 3.5; }
.op { fill: #fff; stroke: #808080; stroke-width: 3; }
.op-t { font-size: 23px; font-weight: 700; font-style: italic; text-anchor: middle; fill: #555; }
.cell { fill: #b3dafc; }
.cell-on { fill: #74b0d9; }
.cell-t { font-size: 23px; fill: #fff; }

.box { fill: #fff; stroke: #1a1a1a; stroke-width: 2; }
.unit { fill: #e9ebe6; stroke: #5c8557; stroke-width: 1.6; }
.xt { font-size: 18px; text-anchor: middle; fill: #111; }
.yt { font-size: 18px; fill: #111; }
.ax-real { font-size: 21.5px; text-anchor: end; fill: #111; }
.ax-imag { font-size: 22px; text-anchor: end; fill: #111; }
.halo { fill: #fff; fill-opacity: .7; }
.ring { fill: #fff; stroke-width: 3; }
.r-blue { stroke: #3f6d96; }
.r-red { stroke: #7a4a4c; }
.dot { fill: #5c8557; }
.bracket { fill: none; stroke: #5b3a86; stroke-width: 4; stroke-dasharray: 13 5; }
.gate-x { font-size: 62px; font-weight: 700; font-style: italic; fill: #9b3fe3; }

.q-odd { fill: #f7f7f7; }
.q-even { fill: #fff; }
.qname { font-size: 26.5px; fill: #555; }
.wire-halo { fill: none; stroke: #cfe0ee; stroke-width: 6; }
.wire { fill: none; stroke: #85b0d4; stroke-width: 3.5; }
.ctrl-line { fill: none; stroke: #466a97; stroke-width: 3; }
.ctrl { fill: #fff; stroke: #466a97; stroke-width: 3; }
.qg rect { fill: #fff; stroke: #466a97; stroke-width: 3; }
.qg text { font-size: 24px; font-weight: 700; font-style: italic; text-anchor: middle; fill: #466a97; }
```
